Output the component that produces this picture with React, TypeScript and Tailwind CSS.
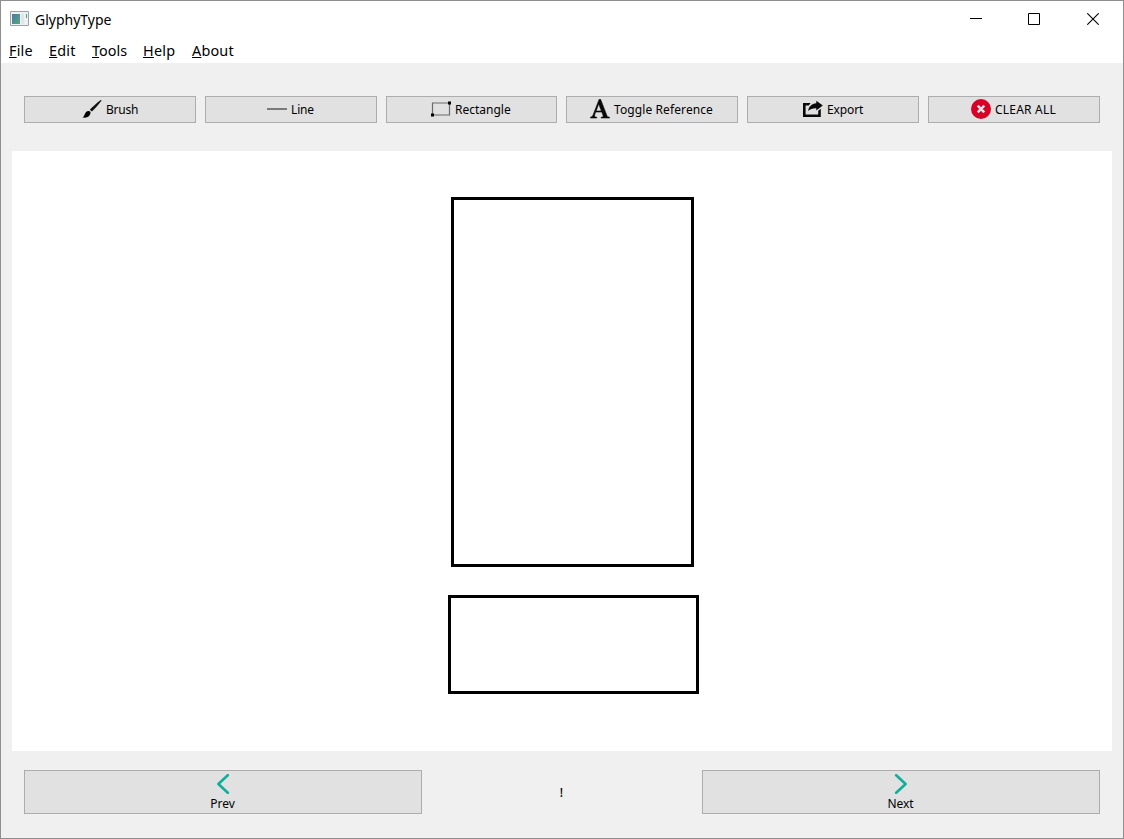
import type { ReactNode } from 'react';

const BrushIcon = () => (
  <svg width="20" height="20" viewBox="0 0 20 20" className="shrink-0">
    <path d="M19.400 1c.2.3 0 .8-.4 1.300-2.800 3.900-6 7.300-9.200 10.100L7.800 10.800C11 7.400 14.400 4.400 18.400 1.300c.5-.3.800-.5 1-.3z" fill="#111" />
    <path d="M6.800 12c1.200.1 2 1.100 1.700 2.300-.5 2.600-2.700 4.400-5.500 4.400-1 0-2 0-2.800-.4 1.200-.4 1.800-1.100 2.300-2.500.7-2 1.900-4 4.300-3.800z" fill="#000" />
  </svg>
);

const LineIcon = () => (
  <svg width="20" height="20" viewBox="0 0 20 20" className="shrink-0">
    <path d="M0 9h20v2H0z" fill="#7a7a7a" />
  </svg>
);

const RectangleIcon = () => (
  <svg width="20" height="20" viewBox="0 0 20 20" className="shrink-0">
    <path d="M1.500 4h17v12h-17z" fill="none" stroke="#6b6b6b" strokeWidth="1.200" />
    <path d="M17 2.500h3v3h-3zM0 14.500h3v3H0z" fill="#000" />
  </svg>
);

const LetterIcon = () => (
  <svg width="20" height="20" viewBox="0 0 20 20" className="shrink-0">
    <path
      fillRule="evenodd"
      d="M9.100.3h1.500l6.100 15.600c.6 1.500 1.200 2.100 2.900 2.300v.9h-8.500v-.9c1.900-.1 2.400-.6 1.800-2.200l-1.100-2.900H5.700l-.8 2.200c-.7 1.900-.2 2.700 1.900 2.900v.9H.4v-.9c1.500-.3 2.200-1.100 2.900-2.900zM8.700 5.100l-2.500 6.800h5.100z"
      fill="#080808"
      stroke="#080808"
      strokeWidth=".5"
    />
  </svg>
);

const ExportIcon = () => (
  <svg width="20" height="20" viewBox="0 0 20 20" className="shrink-0">
    <path d="M0 4h7.600L5.800 6.500H2.600v9H15.200v-3.700l2.600-2V18H0z" fill="#080808" />
    <path d="M13.300 1.800l6.500 4.800-6.500 4.900V9.200C9.900 9 7.500 9.900 5.200 12c.4-4.300 3.400-7.500 8.100-7.800z" fill="#080808" />
  </svg>
);

const ClearIcon = () => (
  <svg width="20" height="20" viewBox="0 0 20 20" className="shrink-0">
    <circle cx="10" cy="10" r="10" fill="#d80027" />
    <path d="M6.700 6.700l6.600 6.600m0-6.600l-6.600 6.600" stroke="#e6e6e6" strokeWidth="2.500" />
  </svg>
);

const Chevron = ({ d }: { d: string }) => (
  <svg width="20" height="20" viewBox="0 0 20 20" className="shrink-0">
    <path d={d} fill="none" stroke="#11ae9b" strokeWidth="2.600" strokeLinecap="round" strokeLinejoin="round" />
  </svg>
);

const AppIcon = () => (
  <svg width="19" height="16" viewBox="0 0 19 16">
    <defs>
      <linearGradient id="screen" x1="0" y1="0" x2="1" y2="1">
        <stop offset="0" stopColor="#4a78a8" />
        <stop offset="1" stopColor="#55a878" />
      </linearGradient>
    </defs>
    <path d="M.5.5h18v14H.5z" fill="#eef1f3" stroke="#9ba3a9" />
    <path d="M2 3h8v10H2z" fill="url(#screen)" />
    <path d="M11 3h3v10h-3z" fill="#e2e5e7" />
    <path d="M16 3h1v4h-1z" fill="#55a080" />
  </svg>
);

const menus = [
  { key: 'F', rest: 'ile', size: 'w-6 tracking-[0.2px]' },
  { key: 'E', rest: 'dit', size: 'w-[27px] tracking-[0.2px]' },
  { key: 'T', rest: 'ools', size: 'w-[35px]' },
  { key: 'H', rest: 'elp', size: 'w-[33px] tracking-[0.25px]' },
  { key: 'A', rest: 'bout', size: 'w-[42px] tracking-[0.2px]' },
];

const tools: { label: string; icon: ReactNode; button: string; text: string }[] = [
  { label: 'Brush', icon: <BrushIcon />, button: 'w-[172px]', text: 'w-8 tracking-[-0.2px]' },
  { label: 'Line', icon: <LineIcon />, button: 'w-[172px]', text: 'w-6 tracking-[-0.15px]' },
  { label: 'Rectangle', icon: <RectangleIcon />, button: 'w-[171px]', text: 'w-[57px]' },
  { label: 'Toggle Reference', icon: <LetterIcon />, button: 'w-[172px]', text: 'w-[100px] tracking-[0.1px]' },
  { label: 'Export', icon: <ExportIcon />, button: 'w-[172px]', text: 'w-9 tracking-[-0.1px]' },
  { label: 'CLEAR ALL', icon: <ClearIcon />, button: 'w-[172px]', text: 'w-[62px] tracking-[0.22px]' },
];

export default function App() {
  return (
    <div className="flex h-[839px] w-[1124px] flex-col border border-[#8f8f8f] bg-[#f0f0f0] font-['Noto_Sans',sans-serif] text-black">
      <header className="h-[62px] shrink-0 bg-white">
        <div className="flex h-9 items-center justify-between pr-6 pl-[9px]">
          <div className="flex items-center gap-1.5">
            <AppIcon />
            <h1 className="pt-0.5 text-[14px] leading-5">GlyphyType</h1>
          </div>
          <div className="flex items-center">
            <button aria-label="Minimize" className="mr-[46px]">
              <svg width="12" height="12" className="block"><path d="M0 5h12v1H0z" /></svg>
            </button>
            <button aria-label="Maximize" className="mr-[47px]">
              <svg width="12" height="12" className="block"><path d="M.5.5h11v11H.5z" fill="none" stroke="#000" /></svg>
            </button>
            <button aria-label="Close">
              <svg width="12" height="12" className="block"><path d="M.3.3l11.400 11.400m0-11.400L.3 11.700" stroke="#000" strokeWidth="1.100" /></svg>
            </button>
          </div>
        </div>
        <nav className="flex h-[26px] gap-4 pt-1 pl-2 text-[14.4px] leading-5">
          {menus.map((m) => (
            <span key={m.key} className={`${m.size} whitespace-nowrap`}>
              <span className="underline decoration-1 underline-offset-1">{m.key}</span>
              {m.rest}
            </span>
          ))}
        </nav>
      </header>

      <div className="flex shrink-0 gap-[9px] pt-[33px] pb-7 pl-[23px]">
        {tools.map((t) => (
          <button
            key={t.label}
            className={`${t.button} flex h-[27px] items-start justify-center gap-1 border border-[#adadad] bg-[#e1e1e1] pt-0.5 text-[12px] leading-4`}
          >
            {t.icon}
            <span className={`${t.text} pt-[2.5px] text-left whitespace-nowrap`}>{t.label}</span>
          </button>
        ))}
      </div>

      <main className="mx-[11px] h-[600px] w-[1100px] shrink-0 bg-white pt-[46px]">
        <div className="ml-[439px] h-[370px] w-[243px] border-3 border-black" />
        <div className="mt-7 ml-[436px] h-[99px] w-[251px] border-3 border-black" />
      </main>

      <footer className="flex pt-[19px] pl-[23px] text-[12px] leading-4">
        <button className="flex h-11 w-[398px] flex-col items-center border border-[#adadad] bg-[#e1e1e1] pt-[3px]">
          <Chevron d="M14.800 1.200L5.400 10l9.400 8.800" />
          <span className="mt-0.5 mr-px h-4">Prev</span>
        </button>
        <div className="flex h-11 w-[280px] items-center justify-center pt-0.5 pr-px font-medium">!</div>
        <button className="flex h-11 w-[398px] flex-col items-center border border-[#adadad] bg-[#e1e1e1] pt-[3px]">
          <Chevron d="M5.200 1.200l9.400 8.800-9.400 8.800" />
          <span className="mt-0.5 mr-px h-4 tracking-[-0.1px]">Next</span>
        </button>
      </footer>
    </div>
  );
}
